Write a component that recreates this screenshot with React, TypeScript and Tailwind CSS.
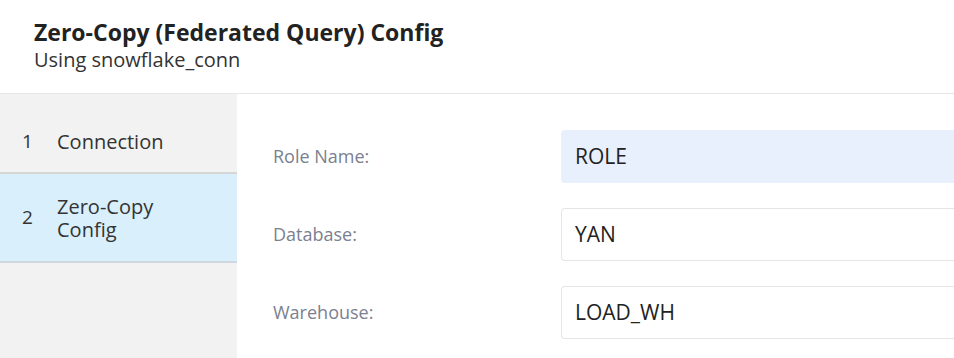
const fields = [
  { label: "Role Name:", value: "ROLE", filled: true },
  { label: "Database:", value: "YAN", filled: false },
  { label: "Warehouse:", value: "LOAD_WH", filled: false },
];

const steps = [
  { n: 1, label: "Connection", active: false },
  { n: 2, label: "Zero-Copy Config", active: true },
];

export default function App() {
  return (
    <div className="h-[358px] w-[954px] overflow-hidden bg-white font-['Open_Sans',sans-serif] text-[#222]">
      <div className="h-[94px] border-b border-[#e6e6e6] px-[34px] pt-[17px]">
        <h1 className="text-[23px] font-bold leading-[30px] text-[#222]">
          Zero-Copy (Federated Query) Config
        </h1>
        <p className="text-[20px] leading-[26px] text-[#333]">Using snowflake_conn</p>
      </div>

      <div className="flex h-[264px]">
        <div className="w-[237px] shrink-0 bg-[#f2f2f2]">
          {steps.map((s) => (
            <div
              key={s.n}
              className={
                s.active
                  ? "flex h-[89px] items-center border-b-2 border-[#cfd8de] bg-[#d9effc] pl-[22px] pr-4"
                  : "flex h-[80px] items-center border-b-2 border-[#d6d6d6] pl-[22px] pr-4 pt-[16px]"
              }
            >
              <span className="w-[35px] text-[19px] text-[#333]">{s.n}</span>
              <span className="w-[120px] text-[20px] leading-[23px] text-[#333]">{s.label}</span>
            </div>
          ))}
        </div>

        <div className="flex flex-1 flex-col gap-[25px] pl-[36px] pt-[36px]">
          {fields.map((f) => (
            <div key={f.label} className="flex items-center">
              <label className="w-[288px] shrink-0 text-[18px] text-[#7b8090]">{f.label}</label>
              <div
                className={
                  f.filled
                    ? "flex h-[53px] flex-1 items-center rounded-l-[4px] bg-[#e8f0fe] pl-[14px] text-[21px] text-[#222]"
                    : "flex h-[53px] flex-1 items-center rounded-l-[4px] border border-r-0 border-[#e6e6e6] pl-[13px] text-[21px] text-[#222]"
                }
              >
                {f.value}
              </div>
            </div>
          ))}
        </div>
      </div>
    </div>
  );
}
